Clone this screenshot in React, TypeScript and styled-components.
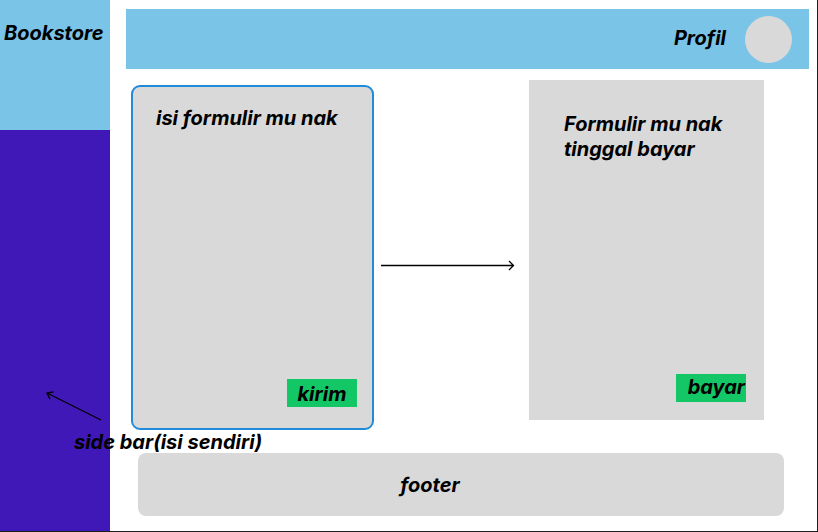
import React from "react";
import styled, { createGlobalStyle } from "styled-components";

const GlobalStyle = createGlobalStyle`
  * { box-sizing: border-box; }
  body {
    margin: 0;
    background: #fff;
    color: #000;
    font: italic 700 20px/25px Inter, sans-serif;
  }
  h1, h2, p { margin: 0; font: inherit; }
`;

const Page = styled.div`
  display: grid;
  grid-template-columns: 110px minmax(0, 1fr);
  min-height: 100vh;
  border-right: 1px solid #1e1e1e;
  border-bottom: 1px solid #1e1e1e;
`;

const Sidebar = styled.aside`
  position: relative;
  background: #4018b8;
`;

const Brand = styled.h1`
  height: 130px;
  padding: 21px 4px;
  background: #7ac4e7;
`;

const SidebarNote = styled.div`
  position: absolute;
  left: 44px;
  bottom: 76px;
  white-space: nowrap;

  p { padding-left: 30px; }
`;

const NoteArrow = styled.svg`
  display: block;
  margin-bottom: 7px;
`;

const Main = styled.main`
  display: flex;
  flex-direction: column;
  padding: 9px 8px 15px 16px;
`;

const Header = styled.header`
  display: flex;
  align-items: center;
  justify-content: flex-end;
  gap: 19px;
  height: 60px;
  padding: 0 17px;
  background: #7ac4e7;
`;

const ProfileLabel = styled.span`
  padding-bottom: 2px;
`;

const Avatar = styled.span`
  width: 47px;
  height: 47px;
  border-radius: 50%;
  background: #d9d9d9;
`;

const Steps = styled.div`
  display: grid;
  grid-template-columns: 243fr 155fr 235fr;
  flex: 1;
  margin: 11px 45px 23px 5px;
`;

const Card = styled.section<{ $active?: boolean }>`
  display: flex;
  flex-direction: column;
  justify-content: space-between;
  min-height: 340px;
  background: #d9d9d9;
  margin: ${(p) => (p.$active ? "5px 0 0" : "0 0 10px")};
  padding: ${(p) => (p.$active ? "19px 15px 21px 23px" : "32px 18px 18px 35px")};
  border: ${(p) => (p.$active ? "2px solid #218bd9" : "0")};
  border-radius: ${(p) => (p.$active ? "9px" : "0")};
`;

const Action = styled.button<{ $align: "center" | "right" }>`
  align-self: flex-end;
  width: 70px;
  height: 28px;
  padding: ${(p) => (p.$align === "center" ? "3px 0 0" : "0 1px 1px 0")};
  border: 0;
  background: #14c766;
  color: inherit;
  font: inherit;
  text-align: ${(p) => p.$align};
  cursor: pointer;
`;

const FlowArrow = styled.svg`
  align-self: center;
  margin: 21px 0 0 7px;
`;

const Footer = styled.footer`
  height: 63px;
  margin: 0 25px 0 12px;
  padding: 20px 62px 18px 0;
  border-radius: 8px;
  background: #d9d9d9;
  text-align: center;
`;

export default function App() {
  return (
    <>
      <GlobalStyle />
      <Page>
        <Sidebar>
          <Brand>Bookstore</Brand>
          <SidebarNote>
            <NoteArrow width="60" height="32" fill="none" stroke="#000" strokeWidth="1.3" aria-hidden="true">
              <path d="M57 29 3 2M9.5 .8 3 2l3 6.2" />
            </NoteArrow>
            <p>side bar(isi sendiri)</p>
          </SidebarNote>
        </Sidebar>
        <Main>
          <Header>
            <ProfileLabel>Profil</ProfileLabel>
            <Avatar />
          </Header>
          <Steps>
            <Card $active>
              <h2>isi formulir mu nak</h2>
              <Action type="button" $align="center">kirim</Action>
            </Card>
            <FlowArrow width="135" height="12" fill="none" stroke="#000" strokeWidth="1.3" aria-hidden="true">
              <path d="M0 5.500H132.500M128 1l4.500 4.500L128 10" />
            </FlowArrow>
            <Card>
              <h2>Formulir mu nak tinggal bayar</h2>
              <Action type="button" $align="right">bayar</Action>
            </Card>
          </Steps>
          <Footer>footer</Footer>
        </Main>
      </Page>
    </>
  );
}
